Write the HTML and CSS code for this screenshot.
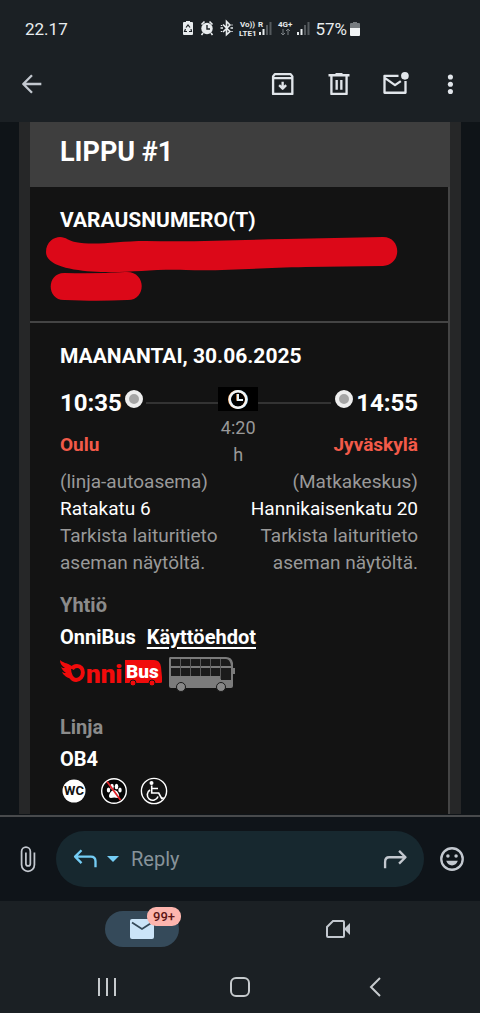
FILE: index.html
```html
<!DOCTYPE html>
<html lang="fi">
<head>
<meta charset="utf-8">
<meta name="viewport" content="width=device-width, initial-scale=1">
<title>Lippu</title>
<link rel="stylesheet" href="styles.css">
</head>
<body>
<div class="status">
  <span class="status-time">22.17</span>
  <div class="status-right">
    <svg class="status-icons" width="130" height="20" viewBox="0 0 130 20" fill="#e8ecee" aria-hidden="true">
      <path d="M4 3V2h4v1h2q1 0 1 1v11q0 1-1 1H2q-1 0-1-1V4q0-1 1-1z"/>
      <path d="M4 8.500 6 6l2 2.500M9 10l.5 2.500H7M5 12.500H2.500L3.500 10" fill="none" stroke="#1b2024" stroke-width="1.200"/>
      <circle cx="25" cy="9.500" r="5.700"/>
      <path d="M19.500 5.500l3-3M30.500 5.500l-3-3M21 14l-1.500 2M29 14l1.500 2" stroke="#e8ecee" stroke-width="1.600"/>
      <path d="M25 6v4h3" fill="none" stroke="#1b2024" stroke-width="1.400"/>
      <path d="M41 5.500l7 7-3.500 3.200V2.500L48 6l-7 7" fill="none" stroke="#e8ecee" stroke-width="1.600"/>
      <path d="M38.500 9h2.500M48.500 9h2.500M39.500 6v1M50 5.500v1M39.500 12v1M50 12v1" stroke="#e8ecee" stroke-width="1.400"/>
      <text class="tiny" x="58" y="8">Vo))</text>
      <text class="tiny" x="57" y="17">LTE1</text>
      <text class="tiny" x="76" y="8">R</text>
      <path d="M77 13h2v3h-2zM80.500 10h2v6h-2z"/>
      <path d="M84 6h2v10h-2zM87.500 3h2v13h-2z" fill="#555a5e"/>
      <text class="tiny" x="96" y="8">4G+</text>
      <path d="M101 10v6m-2-2 2 2 2-2M106 16v-6m-2 2 2-2 2 2" fill="none" stroke="#7b8084" stroke-width="1"/>
      <path d="M115 13h2v3h-2zM118.500 10h2v6h-2z"/>
      <path d="M122 6h2v10h-2zM125.500 3h2v13h-2z" fill="#555a5e"/>
    </svg>
    <span class="status-battery">57%</span>
    <svg width="10" height="16" viewBox="0 0 10 16" aria-hidden="true"><path d="M3 2V1h4v1h2q1 0 1 1v5H0V3q0-1 1-1z" fill="#777c80"/><path d="M0 7h10v7q0 1-1 1H1q-1 0-1-1z" fill="#f1f4f5"/></svg>
  </div>
</div>

<header class="toolbar">
  <button class="icon-btn" aria-label="Back"><svg viewBox="0 0 24 24"><path d="M20 12H5M12 4.500 4.500 12l7.500 7.500" class="ln"/></svg></button>
  <div class="toolbar-actions">
    <button class="icon-btn bright" aria-label="Archive"><svg viewBox="0 0 24 24"><path d="M3.500 7V20.500h16.500V7M3.500 7V5.500L5 3.500h13.500L20 5.500V7zM11.700 10v6M8.700 13l3 3 3-3" class="ln"/></svg></button>
    <button class="icon-btn bright" aria-label="Delete"><svg viewBox="0 0 24 24"><path d="M3 4.500h18M9 3.500h6M5.500 5v15.500h13V5M10 8.500v8.500M14 8.500v8.500" class="ln"/></svg></button>
    <button class="icon-btn bright" aria-label="Mark as unread"><svg viewBox="0 0 24 24"><path d="M15 5H3v14.500h18V9.500M3.500 7l8.500 6 5-3.500" class="ln"/><circle cx="20.500" cy="5" r="3.300" fill="currentColor"/></svg></button>
    <button class="icon-btn bright" aria-label="More"><svg viewBox="0 0 24 24" fill="currentColor"><circle cx="11.500" cy="6" r="2.200"/><circle cx="11.500" cy="12.200" r="2.200"/><circle cx="11.500" cy="18.400" r="2.200"/></svg></button>
  </div>
</header>

<main class="mail">
  <article class="ticket">
    <h1 class="ticket-title">LIPPU #1</h1>
    <section class="booking">
      <h2 class="heading">VARAUSNUMERO(T)</h2>
      <svg class="redaction" viewBox="0 0 352 65" role="img" aria-label="Varausnumero peitetty"><path d="M0 15C0 5 8 0 14 0c6 0 9 4 15 5C50 9 70 4 100 4c50 1 90-1 140-2l97-2c19 0 19 28 0 29L260 30c-50 1-80 4-120 3-35-1-55 3-85 2C30 34 0 30 0 15z"/><path d="M19 36q30 1 60-1c22-2 22 29 2 28-20 1-40 1-62 0-19 1-19-28 0-27z"/></svg>
    </section>
    <section class="trip">
      <h2 class="heading">MAANANTAI, 30.06.2025</h2>
      <div class="route">
        <div class="time">10:35<span class="stop-dot"></span></div>
        <div class="middle">
          <div class="track"><svg class="clock" width="40" height="24" viewBox="0 0 40 24" aria-hidden="true"><path d="M0 0h40v24H0z" fill="#000"/><circle cx="19.500" cy="12.500" r="8.500" fill="none" stroke="#e99a55" stroke-width="2"/><circle cx="20.500" cy="12.500" r="8.500" fill="none" stroke="#78b8dc" stroke-width="2"/><circle cx="20" cy="12.500" r="8.300" fill="none" stroke="#f4f4f4" stroke-width="2.400"/><path d="M19 7v6h6" fill="none" stroke="#e99a55" stroke-width="1.500"/><path d="M20 7v6h5" fill="none" stroke="#e4f2fa" stroke-width="2"/></svg></div>
          <p class="duration">4:20 h</p>
        </div>
        <div class="time"><span class="stop-dot"></span>14:55</div>
        <strong class="city">Oulu</strong>
        <strong class="city city-end">Jyväskylä</strong>
      </div>
      <div class="stops">
        <p>(linja-autoasema)<br><span class="street">Ratakatu 6</span><br>Tarkista laituritieto<br>aseman näytöltä.</p>
        <p class="stop-end">(Matkakeskus)<br><span class="street">Hannikaisenkatu 20</span><br>Tarkista laituritieto<br>aseman näytöltä.</p>
      </div>
      <h3 class="label">Yhtiö</h3>
      <p class="value"><span>OnniBus</span><a href="#terms">Käyttöehdot</a></p>
      <div class="logos">
        <svg width="102" height="34" viewBox="0 0 102 34" role="img" aria-label="OnniBus">
          <path d="M0 4c3 3 7 3 10 5 3 1 4 3 4 5v10C7 22 3 19 2 16c2 1 3 1 4 1-3-2-4-4-5-6 1 1 3 1 4 1C2 10 0 8 0 4z" fill="#f10b0b"/>
          <path d="M9 12c0 7 3 12 7 12 9-1 9-14 1-14-3 0-4 1-5 3" fill="#131313" stroke="#f10b0b" stroke-width="4"/>
          <text class="logo-onni" x="26" y="27">nni</text>
          <path d="M65 4h29q6 0 7 7l1 10v5q0 1-2 1H65z" fill="#f10b0b"/>
          <circle cx="73" cy="27" r="3" fill="#f10b0b" stroke="#131313"/><circle cx="92" cy="27" r="3" fill="#f10b0b" stroke="#131313"/>
          <text class="logo-bus" x="66" y="22">Bus</text>
        </svg>
        <svg width="68" height="36" viewBox="0 0 68 36" aria-hidden="true">
          <path d="M2 1h56q6 0 7 6v5h2v6h-2v12q0 2-2 2H3q-2 0-2-2V3q0-2 1-2z" fill="#7b7b7b"/>
          <path d="M3 3h55q4 0 5 7H3zM3 12h60v8H3zM53 20h10v4H53z" fill="#1b1b1b"/>
          <path d="M12.500 3v17M22.500 3v17M32.500 3v17M42.500 3v17M52.500 3v20" stroke="#5a5a5a"/>
          <g fill="#888" stroke="#191919"><circle cx="13" cy="31" r="4.500"/><circle cx="53" cy="31" r="4.500"/></g>
        </svg>
      </div>
      <h3 class="label">Linja</h3>
      <p class="value">OB4</p>
      <div class="amenities">
        <svg width="28" height="28" viewBox="0 0 28 28" role="img" aria-label="WC"><circle cx="14" cy="14" r="11.500" fill="#fff"/><text class="wc" x="14" y="18">WC</text></svg>
        <svg width="28" height="28" viewBox="0 0 28 28" role="img" aria-label="Ei lemmikkejä"><circle cx="14" cy="14" r="12.300" fill="#050505" stroke="#fff" stroke-width="1.400"/><g fill="#fff"><ellipse cx="8.500" cy="13" rx="1.700" ry="2.500"/><ellipse cx="12" cy="9.500" rx="1.800" ry="2.700"/><ellipse cx="16.500" cy="9.500" rx="1.800" ry="2.700"/><ellipse cx="20" cy="13" rx="1.700" ry="2.500"/><path d="M14.200 13c3 0 5 4 5 6 0 3-3 1.500-5 1.500S9 22 9 19c0-2 2.500-6 5.200-6z"/></g><path d="M7 4.500 20.500 23" stroke="#e3242b" stroke-width="1.800"/></svg>
        <svg width="28" height="28" viewBox="0 0 28 28" role="img" aria-label="Esteetön"><circle cx="14" cy="14" r="12.600" fill="none" stroke="#fff" stroke-width="1.400"/><circle cx="11.500" cy="6" r="2" fill="#fff"/><path d="M11.700 8.500v7.500h7l3 5.500 2-.8M12 11.500h6M10 13a5.500 5.500 0 1 0 8 6.500" fill="none" stroke="#fff" stroke-width="1.600"/></svg>
      </div>
    </section>
  </article>
</main>

<div class="reply-bar">
  <button class="icon-btn" aria-label="Attach"><svg viewBox="0 0 24 24"><path d="M17.500 6.500V17a5.500 5.500 0 0 1-11 0V5.500a3.700 3.700 0 0 1 7.500 0V16a1.900 1.900 0 0 1-3.800 0V6.500" class="ln thin"/></svg></button>
  <div class="reply-box">
    <button class="icon-btn accent" aria-label="Reply type"><svg viewBox="0 0 24 24"><path d="M9 4.500 3.500 10 9 15.500M3.500 10H17q4 0 4 4v5" class="ln"/></svg></button>
    <button class="caret" aria-label="Choose reply type"><svg width="12" height="6" viewBox="0 0 12 6"><path d="M0 0h12L6 6z" fill="currentColor"/></svg></button>
    <input class="reply-input" type="text" placeholder="Reply" aria-label="Reply">
    <button class="icon-btn forward" aria-label="Forward"><svg viewBox="0 0 24 24"><path d="M15.500 5 21 10.500 15.500 16M21 10.500H7q-3.500 0-3.500 4V20" class="ln"/></svg></button>
  </div>
  <button class="icon-btn" aria-label="Emoji"><svg viewBox="0 0 24 24"><circle cx="12" cy="12" r="9.200" class="ln"/><circle cx="8.500" cy="9.500" r="1.500" fill="currentColor"/><circle cx="15.500" cy="9.500" r="1.500" fill="currentColor"/><path d="M7 13.500h10q-1.500 4-5 4t-5-4z" fill="currentColor"/></svg></button>
</div>

<nav class="tabs">
  <button class="tab active" aria-label="Mail"><svg width="26" height="20" viewBox="0 0 26 20" aria-hidden="true"><rect x="1" width="24" height="20" rx="2" fill="#cbe4f8"/><path d="M3 3.500 13 10l10-6.500" fill="none" stroke="#354a5a" stroke-width="1.800"/></svg><span class="badge">99+</span></button>
  <button class="tab" aria-label="Meet"><svg width="26" height="20" viewBox="0 0 26 20" aria-hidden="true"><path d="M8 2h10q1 0 1 1v14q0 1-1 1H3q-1 0-1-1V8z" fill="none" stroke="#c3c8cf" stroke-width="2"/><path d="m19 10 6-6v12z" fill="#c3c8cf"/></svg></button>
</nav>
<nav class="system">
  <button aria-label="Recents"><svg width="24" height="24" viewBox="0 0 24 24"><path d="M4 3v18M12 3v18M20 3v18" class="sys"/></svg></button>
  <button aria-label="Home"><svg width="24" height="24" viewBox="0 0 24 24"><rect x="3" y="3" width="18" height="18" rx="5" class="sys"/></svg></button>
  <button aria-label="Back"><svg width="24" height="24" viewBox="0 0 24 24"><path d="m19 3-9 9 9 9" class="sys"/></svg></button>
</nav>
</body>
</html>
```
FILE: styles.css
```css
* { box-sizing: border-box; }
body {
  margin: 0;
  min-height: 100vh;
  display: flex;
  flex-direction: column;
  background: #1b2024;
  color: #fff;
  font-family: Roboto, "Noto Sans", sans-serif;
  font-size: 20px;
  line-height: 27px;
}
h1, h2, h3, p { margin: 0; }
svg { display: block; flex: none; }
button {
  padding: 0;
  border: 0;
  background: none;
  color: inherit;
  display: flex;
  align-items: center;
  justify-content: center;
}
.ln { fill: none; stroke: currentColor; stroke-width: 2; stroke-linejoin: round; }
.thin { stroke-width: 1.500; }

.status {
  display: flex;
  justify-content: space-between;
  align-items: center;
  height: 58px;
  padding: 0 120px 0 25px;
  color: #e8ecee;
  font-size: 17px;
}
.status-right { display: flex; align-items: center; gap: 3px; }
.tiny { font-size: 8px; font-weight: 700; }

.toolbar {
  display: flex;
  justify-content: space-between;
  height: 64px;
  padding: 12px 15px 24px 18px;
}
.toolbar-actions { display: flex; gap: 28px; }
.icon-btn { width: 28px; height: 28px; flex: none; color: #c3c8cf; }
.icon-btn svg { width: 100%; height: 100%; }
.bright { color: #e1e5ea; }

.mail {
  flex: 1;
  padding: 0 19px;
  background: #0f1418;
}
.ticket {
  height: 100%;
  display: flex;
  flex-direction: column;
  padding: 0 11px;
  background: #262728;
}
.ticket-title {
  padding: 14px 30px 19px;
  background: #3e3e3e;
  font-size: 27px;
  line-height: 32px;
}
.booking, .trip { background: #131313; border-right: 2px solid #444; padding: 0 30px; }
.booking { padding-top: 20px; padding-bottom: 19px; border-bottom: 2px solid #444; }
.trip { flex: 1; padding-top: 20px; padding-bottom: 9px; }
.heading { font-size: 21px; font-weight: 700; line-height: 27px; }
.redaction { width: 352px; height: 65px; margin: 3px 0 0 -14px; fill: #dc0818; }

.route {
  display: grid;
  grid-template-columns: auto 1fr auto;
  grid-template-rows: auto 1fr;
  column-gap: 3px;
  margin-top: 17px;
}
.time {
  display: flex;
  gap: 3px;
  height: 34px;
  font-size: 24px;
  font-weight: 700;
  line-height: 32px;
}
.time:nth-child(3) { justify-content: flex-end; }
.stop-dot {
  width: 18px;
  height: 18px;
  margin-top: 3px;
  border: 4px solid #eee;
  border-radius: 50%;
  background: #a5a5a5;
}
.middle { grid-row: 1 / 3; grid-column: 2; }
.track {
  display: flex;
  justify-content: center;
  background: linear-gradient(#333, #333) 0 15px / 100% 2px no-repeat;
}
.duration { width: 40px; margin: 3px auto 0; text-align: center; font-size: 18px; color: #999; }
.city { grid-column: 1; grid-row: 2; padding-top: 10px; font-size: 19px; color: #f25a49; }
.city-end { grid-column: 3; text-align: right; }
.stops { display: flex; justify-content: space-between; font-size: 19px; color: #999; }
.stop-end { text-align: right; }
.street { color: #fff; }
.label { margin-top: 16px; font-size: 20px; color: #8b8b8b; }
.value { display: flex; gap: 11px; margin-top: 5px; font-weight: 700; }
.value a { color: #fff; text-underline-offset: 3px; text-decoration-thickness: 2px; }
.logos { display: flex; gap: 6px; margin-top: 5px; margin-bottom: 22px; }
.logo-onni { font-size: 26px; font-weight: 900; fill: #f10b0b; }
.logo-bus { font-size: 19px; font-weight: 900; fill: #fff; }
.amenities { display: flex; gap: 12px; margin-top: 4px; }
.wc { font-size: 13px; font-weight: 700; text-anchor: middle; fill: #111; }

.reply-bar {
  display: flex;
  align-items: center;
  gap: 14px;
  height: 86px;
  padding: 0 14px;
  border-top: 2px solid #484a4c;
  background: #0f1419;
}
.reply-box {
  flex: 1;
  min-width: 0;
  display: flex;
  align-items: center;
  height: 56px;
  padding: 0 15px;
  border-radius: 28px;
  background: #17282f;
}
.accent, .caret { color: #74cdf5; }
.caret { width: 12px; height: 28px; margin-left: 8px; }
.reply-input {
  flex: 1;
  min-width: 0;
  padding: 0 0 0 12px;
  border: 0;
  outline: 0;
  background: none;
  color: #fff;
  font: inherit;
}
.reply-input::placeholder { color: #87939a; opacity: 1; }

.tabs { display: grid; grid-template-columns: 1fr 1fr; justify-items: center; height: 60px; padding: 10px 44px; }
.tab { position: relative; width: 74px; height: 36px; border-radius: 18px; }
.active { background: #354a5a; }
.badge {
  position: absolute;
  top: -4px;
  right: -2px;
  padding: 0 6px;
  border-radius: 9px;
  background: #fdb5ae;
  color: #5c1515;
  font: 500 13px/19px Roboto, sans-serif;
}
.system { display: grid; grid-template-columns: repeat(3, 1fr); height: 52px; padding: 0 40px; }
.sys { fill: none; stroke: #c6cacd; stroke-width: 2; }
```
